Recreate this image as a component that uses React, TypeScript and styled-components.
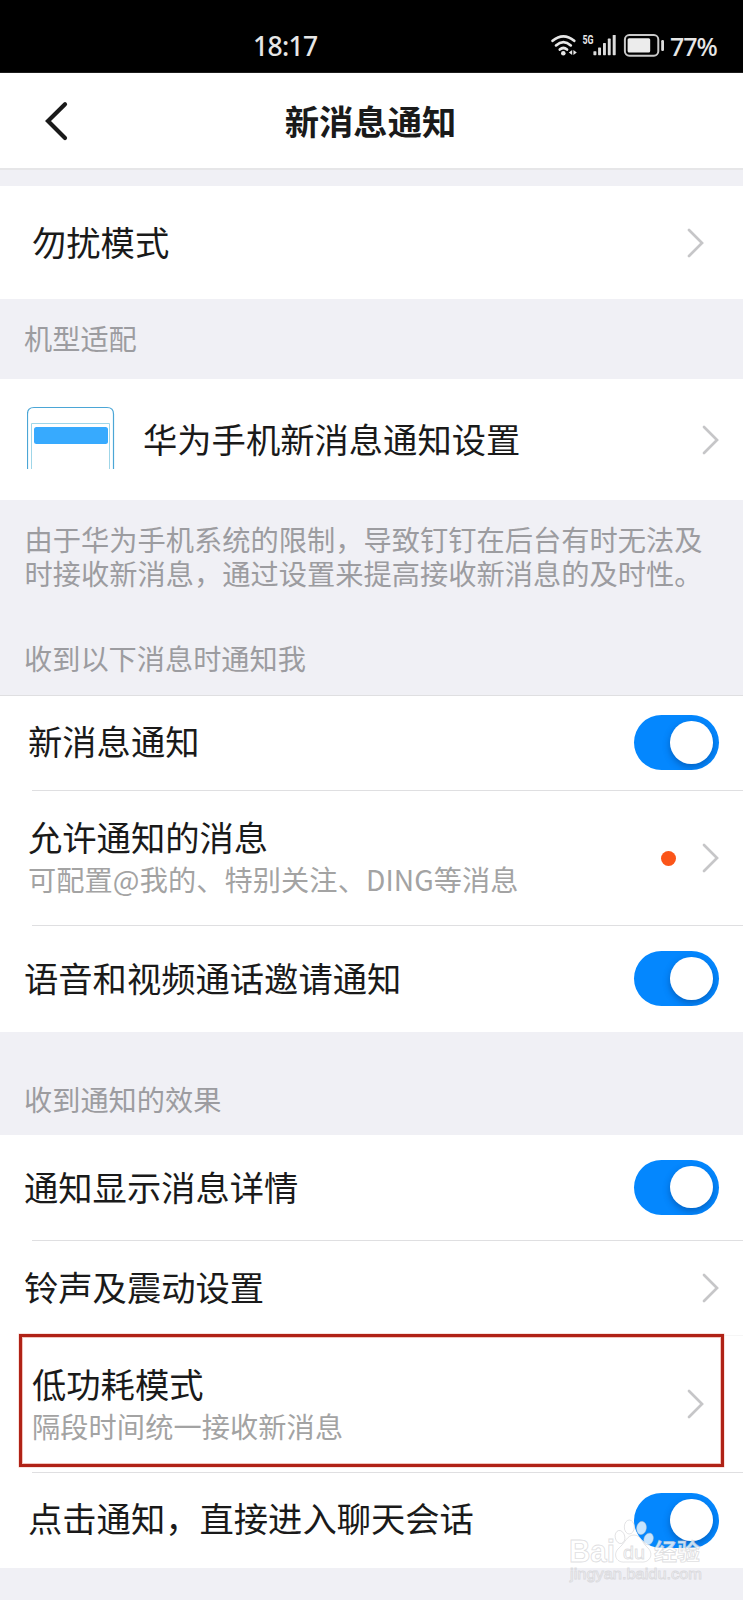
import React from "react";
import styled, { createGlobalStyle } from "styled-components";

const GlobalStyle = createGlobalStyle`
  * { box-sizing: border-box; }
  body {
    margin: 0;
    background: #f0f0f5;
    font-family: "Noto Sans CJK SC", sans-serif;
    color: #1a1a1a;
  }
`;

const Screen = styled.div`
  position: relative;
  display: flex;
  flex-direction: column;
  width: 743px;
  height: 1600px;
  overflow: hidden;
  background: #f0f0f5;
`;

const StatusBar = styled.div`
  display: flex;
  flex: none;
  height: 73px;
  padding-top: 27px;
  background: #000;
  border-bottom: 1px solid #1c1c1c;
  color: #e6e6e6;
  font-family: "Noto Sans", sans-serif;
`;

const Clock = styled.div`
  width: 298px;
  padding-left: 253px;
  font-size: 26.5px;
  font-weight: 500;
  line-height: 38px;
  letter-spacing: -0.7px;
  white-space: nowrap;
`;

const StatusIcons = styled.svg`
  display: block;
  flex: none;
  margin-left: 252px;
  margin-top: 6px;
`;

const BatteryLevel = styled.div`
  margin-left: 5px;
  font-size: 25px;
  font-weight: 500;
  line-height: 38px;
  letter-spacing: -1px;
`;

const NavBar = styled.header`
  display: grid;
  grid-template-columns: 139px 1fr 141px;
  align-items: center;
  flex: none;
  height: 97px;
  padding-bottom: 2px;
  background: #fff;
  border-bottom: 2px solid #e6e6e8;
`;

const BackButton = styled.button`
  display: flex;
  align-items: center;
  width: 100%;
  padding: 2px 0 0 44px;
  border: 0;
  background: none;
`;

const Title = styled.h1`
  margin: 0;
  text-align: center;
  font-size: 34.3px;
  line-height: 46px;
  font-weight: 700;
`;

const Gap = styled.div`
  flex: none;
  height: 16px;
`;

const Section = styled.section`
  flex: none;
  background: #fff;
`;

const Caption = styled.div<{ $height: number; $bottom: number }>`
  display: flex;
  align-items: flex-end;
  flex: none;
  height: ${(p) => p.$height}px;
  padding: 0 24px ${(p) => p.$bottom}px;
  font-size: 28.2px;
  line-height: 34px;
  color: #9c9ca0;
`;

const Hint = styled.p`
  flex: none;
  height: 107px;
  margin: 0;
  padding: 22px 0 0 24.5px;
  font-size: 28.25px;
  line-height: 33.5px;
  color: #9c9ca0;
  white-space: nowrap;
`;

const Row = styled.div<{ $height: number; $left?: number; $right?: number }>`
  position: relative;
  display: flex;
  align-items: center;
  height: ${(p) => p.$height}px;
  padding-left: ${(p) => p.$left ?? 24}px;
  padding-right: ${(p) => p.$right ?? 24}px;
`;

const Divider = styled.div<{ $faint?: boolean; $full?: boolean }>`
  height: 1px;
  margin-left: ${(p) => (p.$full ? 0 : 32)}px;
  background: ${(p) => (p.$faint ? "#f6f6f6" : "#dfdfe1")};
`;

const Labels = styled.div<{ $lift?: number }>`
  display: flex;
  flex-direction: column;
  flex: 1;
  padding-bottom: ${(p) => p.$lift ?? 4}px;
`;

const Label = styled.span`
  font-size: 34.3px;
  line-height: 46px;
  white-space: nowrap;
`;

const Detail = styled.span`
  font-size: 28.2px;
  line-height: 40px;
  letter-spacing: 0.1px;
  color: #a3a3a3;
  white-space: nowrap;
`;

const Dot = styled.i`
  width: 15px;
  height: 15px;
  margin-right: 26px;
  border-radius: 50%;
  background: #fb5519;
`;

const Track = styled.span`
  display: flex;
  align-items: center;
  justify-content: flex-end;
  width: 85px;
  height: 55px;
  margin-bottom: 1px;
  padding-right: 6px;
  border-radius: 28px;
  background: #0487fe;
  overflow: hidden;
`;

const Knob = styled.span`
  width: 42.6px;
  height: 42.6px;
  border-radius: 50%;
  background: #fff;
  box-shadow: 0 3px 7px rgba(0, 30, 80, 0.35);
`;

const PhoneIcon = styled.svg`
  flex: none;
  margin-right: 28px;
  margin-bottom: 4px;
`;

const Highlight = styled.div`
  position: absolute;
  left: 19px;
  top: -2px;
  width: 704.5px;
  height: 133px;
  border: 3px solid #b02216;
  box-shadow: inset 0 0 0 1px #f3c4bd, 0 0 0 0.5px #f3c4bd;
`;

const Watermark = styled.svg`
  position: absolute;
  left: 565px;
  top: 1515px;
`;

const Chevron = () => (
  <svg width="17" height="30" viewBox="0 0 17 30" fill="none">
    <path d="M2 2L15 15L2 28" stroke="#c6c6c8" strokeWidth="2.7" strokeLinecap="round" />
  </svg>
);

const Switch = () => (
  <Track role="switch" aria-checked="true">
    <Knob />
  </Track>
);

export default function App() {
  return (
    <Screen>
      <GlobalStyle />
      <StatusBar>
        <Clock>18:17</Clock>
        <StatusIcons width="115" height="25" viewBox="550 33 115 25" fill="none">
          <g stroke="#e6e6e6" strokeWidth="2.7" strokeLinecap="round">
            <path d="M552.6 40.8Q563.4 31.8 574.2 40.8" />
            <path d="M556 45.4Q563.4 39 570.8 45.4" />
            <path d="M559.8 49.6Q563.4 46.4 567 49.6" />
          </g>
          <circle cx="563.3" cy="53.2" r="2.3" fill="#e6e6e6" />
          <path d="M572.2 50V55L568.8 52.5ZM573.4 50V55L576.8 52.5Z" fill="#e6e6e6" />
          <text
            x="582.5"
            y="44"
            fontFamily="Roboto, sans-serif"
            fontWeight="700"
            fontSize="12.5"
            textLength="11"
            lengthAdjust="spacingAndGlyphs"
            fill="#e6e6e6"
          >
            5G
          </text>
          <g fill="#dcdcdc">
            <rect x="593.4" y="51.2" width="3" height="4" rx="0.6" />
            <rect x="598.1" y="47.4" width="2.9" height="7.8" rx="0.6" />
            <rect x="603" y="43" width="2.9" height="12.2" rx="0.6" />
            <rect x="607.8" y="38.6" width="2.9" height="16.6" rx="0.6" />
            <rect x="612.7" y="35" width="3" height="20.2" rx="0.6" />
          </g>
          <rect x="624.9" y="35.1" width="33.4" height="20.6" rx="4.4" stroke="#c9c9c9" strokeWidth="2" />
          <rect x="627.6" y="38.2" width="22.6" height="14.4" rx="1.6" fill="#ececec" />
          <rect x="661.2" y="40" width="2.8" height="11" rx="1.2" fill="#dcdcdc" />
        </StatusIcons>
        <BatteryLevel>77%</BatteryLevel>
      </StatusBar>

      <NavBar>
        <BackButton aria-label="返回">
          <svg width="26" height="40" viewBox="0 0 26 40" fill="none">
            <path d="M21 3.2L4 20L21 37" stroke="#1a1a1a" strokeWidth="4.2" strokeLinecap="round" />
          </svg>
        </BackButton>
        <Title>新消息通知</Title>
      </NavBar>
      <Gap />

      <Section>
        <Row $height={113} $left={32} $right={39}>
          <Labels>
            <Label>勿扰模式</Label>
          </Labels>
          <Chevron />
        </Row>
      </Section>

      <Caption $height={80} $bottom={24}>机型适配</Caption>

      <Section>
        <Row $height={121} $left={27}>
          <PhoneIcon width="88" height="63" viewBox="0 0 88 63" fill="none">
            <path d="M0.5 63V8Q0.5 1.5 7 1.5H80Q86.5 1.5 86.5 8V63" stroke="#4ba6d6" strokeWidth="1.2" />
            <path d="M4.5 63V17.5H82.5V63" stroke="#9fd6e8" />
            <rect x="7" y="21" width="74" height="17" rx="2.5" fill="#37aafe" />
          </PhoneIcon>
          <Labels>
            <Label>华为手机新消息通知设置</Label>
          </Labels>
          <Chevron />
        </Row>
      </Section>

      <Hint>
        由于华为手机系统的限制，导致钉钉在后台有时无法及
        <br />
        时接收新消息，通过设置来提高接收新消息的及时性。
      </Hint>
      <Caption $height={88} $bottom={20}>收到以下消息时通知我</Caption>

      <Section>
        <Divider $full />
        <Row $height={94} $left={28}>
          <Labels $lift={6}>
            <Label>新消息通知</Label>
          </Labels>
          <Switch />
        </Row>
        <Divider />
        <Row $height={134} $left={28}>
          <Labels $lift={4}>
            <Label>允许通知的消息</Label>
            <Detail>可配置@我的、特别关注、DING等消息</Detail>
          </Labels>
          <Dot />
          <Chevron />
        </Row>
        <Divider />
        <Row $height={106}>
          <Labels>
            <Label>语音和视频通话邀请通知</Label>
          </Labels>
          <Switch />
        </Row>
      </Section>

      <Caption $height={103} $bottom={19}>收到通知的效果</Caption>

      <Section>
        <Row $height={105}>
          <Labels>
            <Label>通知显示消息详情</Label>
          </Labels>
          <Switch />
        </Row>
        <Divider />
        <Row $height={94}>
          <Labels>
            <Label>铃声及震动设置</Label>
          </Labels>
          <Chevron />
        </Row>
        <Divider $faint />
        <Row $height={136} $left={32} $right={39}>
          <Labels $lift={2}>
            <Label>低功耗模式</Label>
            <Detail>隔段时间统一接收新消息</Detail>
          </Labels>
          <Chevron />
          <Highlight />
        </Row>
        <Divider />
        <Row $height={95} $left={28}>
          <Labels $lift={7}>
            <Label>点击通知，直接进入聊天会话</Label>
          </Labels>
          <Switch />
        </Row>
      </Section>

      <Watermark width="145" height="75" viewBox="565 1515 145 75">
        <g fill="#fff" fillOpacity="0.78" stroke="#c4c4c8" strokeOpacity="0.5" strokeWidth="0.9">
          <ellipse cx="620" cy="1537" rx="4.8" ry="6.6" transform="rotate(-12 620 1537)" />
          <ellipse cx="629.3" cy="1527" rx="5" ry="7" />
          <ellipse cx="641.5" cy="1528" rx="4.8" ry="6.6" transform="rotate(8 641.5 1528)" />
          <ellipse cx="648.6" cy="1539" rx="4.6" ry="6" transform="rotate(20 648.6 1539)" />
          <path d="M634 1535C641 1535 642 1543 648 1548C654 1554 650 1563 641 1562H625C615 1563 613 1553 619 1548C625 1543 627 1535 634 1535Z" />
        </g>
        <g stroke="#c4c4c8" strokeWidth="0.9" strokeOpacity="0.55" fill="#fff" fillOpacity="0.8">
          <text x="569" y="1562" fontFamily="Liberation Sans, sans-serif" fontWeight="700" fontSize="31" textLength="46" lengthAdjust="spacingAndGlyphs">
            Bai
          </text>
          <text x="623" y="1559" fontFamily="Liberation Sans, sans-serif" fontSize="19" textLength="22" lengthAdjust="spacingAndGlyphs">
            du
          </text>
          <text x="654" y="1560" fontFamily="Noto Sans CJK SC, sans-serif" fontWeight="700" fontSize="23" textLength="46" lengthAdjust="spacingAndGlyphs">
            经验
          </text>
          <text x="570" y="1579" fontFamily="Liberation Sans, sans-serif" fontSize="15" textLength="132" lengthAdjust="spacingAndGlyphs">
            jingyan.baidu.com
          </text>
        </g>
      </Watermark>
    </Screen>
  );
}
